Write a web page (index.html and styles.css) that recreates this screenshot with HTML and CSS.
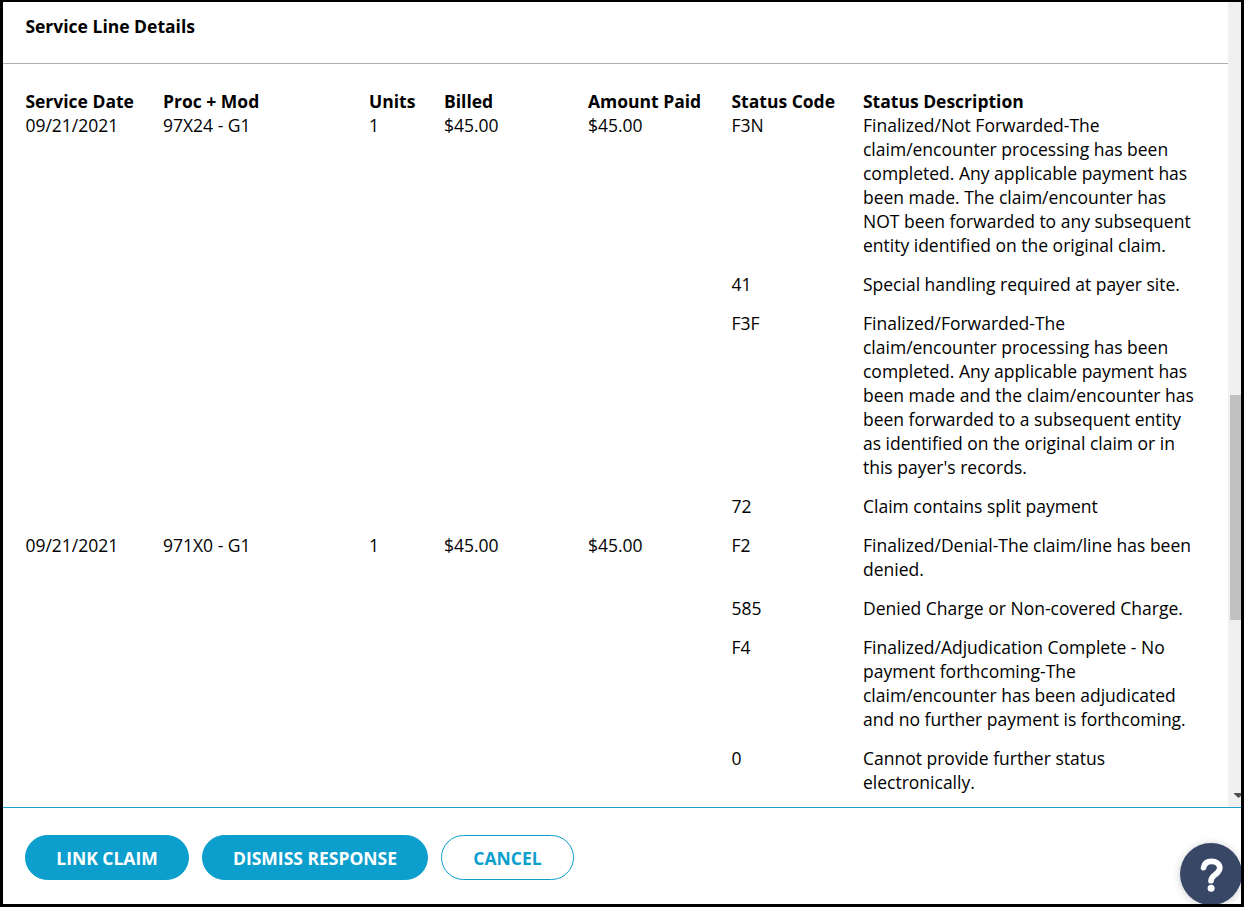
FILE: index.html
```html
<!DOCTYPE html>
<html lang="en">
<head>
<meta charset="utf-8">
<title>Service Line Details</title>
<link rel="stylesheet" href="styles.css">
</head>
<body>
<div class="dialog">
  <div class="body">
    <main class="content">
      <h1 class="title">Service Line Details</h1>
      <section class="lines">
        <div class="row head"><div>Service Date</div><div>Proc + Mod</div><div>Units</div><div>Billed</div><div>Amount Paid</div><div>Status Code</div><div>Status Description</div></div>
        <div class="row">
          <div>09/21/2021</div><div>97X24 - G1</div><div>1</div><div>$45.00</div><div>$45.00</div>
          <div class="statuses">
            <div class="status"><span>F3N</span><p>Finalized/Not Forwarded-The<br>claim/encounter processing has been<br>completed. Any applicable payment has<br>been made. The claim/encounter has<br>NOT been forwarded to any subsequent<br>entity identified on the original claim.</p></div>
            <div class="status"><span>41</span><p>Special handling required at payer site.</p></div>
            <div class="status"><span>F3F</span><p>Finalized/Forwarded-The<br>claim/encounter processing has been<br>completed. Any applicable payment has<br>been made and the claim/encounter has<br>been forwarded to a subsequent entity<br>as identified on the original claim or in<br>this payer's records.</p></div>
            <div class="status"><span>72</span><p>Claim contains split payment</p></div>
          </div>
        </div>
        <div class="row">
          <div>09/21/2021</div><div>971X0 - G1</div><div>1</div><div>$45.00</div><div>$45.00</div>
          <div class="statuses">
            <div class="status"><span>F2</span><p>Finalized/Denial-The claim/line has been<br>denied.</p></div>
            <div class="status"><span>585</span><p>Denied Charge or Non-covered Charge.</p></div>
            <div class="status"><span>F4</span><p>Finalized/Adjudication Complete - No<br>payment forthcoming-The<br>claim/encounter has been adjudicated<br>and no further payment is forthcoming.</p></div>
            <div class="status"><span>0</span><p>Cannot provide further status<br>electronically.</p></div>
          </div>
        </div>
      </section>
    </main>
    <div class="scrollbar"><div class="thumb"></div><svg class="arrow" width="9" height="5" viewBox="0 0 9 5"><path d="M0 0h9v.8L4.500 5 0 .8z" fill="#505050"/></svg></div>
  </div>
  <footer class="actions">
    <button class="btn link">LINK CLAIM</button>
    <button class="btn dismiss">DISMISS RESPONSE</button>
    <button class="btn cancel">CANCEL</button>
  </footer>
  <button class="help" aria-label="Help"><svg width="62" height="62" viewBox="0 0 62 62"><path d="M23.600 24.600C24.200 20.700 27 18.400 31.500 18.400c4.900 0 8.300 2.600 8.300 6.700 0 6.300-8.700 6.500-8.800 12.600" fill="none" stroke="#fff" stroke-width="5.700" stroke-linecap="round"/><circle cx="31.100" cy="45.300" r="3.500" fill="#fff"/></svg></button>
</div>
</body>
</html>
```
FILE: styles.css
```css
* { box-sizing: border-box; }
body { margin: 0; font: 17.5px/24px "Open Sans", sans-serif; color: #000; background: #fff; }
.dialog { position: relative; width: 1244px; height: 907px; border: 2px solid #000; border-left-width: 3px; border-right-width: 3px; border-bottom-width: 3px; overflow: hidden; display: flex; flex-direction: column; }
.body { display: flex; height: 806px; border-bottom: 1px solid #1ba1cb; }
.content { width: 1225px; flex: none; }
.title { margin: 0; height: 62px; padding: 12px 22px 0 22.4px; border-bottom: 1px solid #b0b0b0; font-size: 17.5px; line-height: 24px; font-weight: 700; }
.lines { padding: 25px 22px 0 22.4px; }
.row { display: grid; grid-template-columns: 137.6px 206px 75px 144px 143.5px 131.5px 345px; font-weight: 400; }
.head { font-weight: 700; }
.statuses { grid-column: 6 / 8; }
.status { display: grid; grid-template-columns: 131.5px 345px; margin-bottom: 15px; }
.status p { margin: 0; white-space: nowrap; }
.scrollbar { flex: 1; background: #f0f0f0; overflow: hidden; }
.thumb { width: 11px; height: 225px; margin: 393px 0 0 2px; background: #c1c1c1; }
.arrow { display: block; margin: 173px 0 0 6px; }
.actions { display: flex; gap: 13px; padding: 27px 22px 0; }
.btn { height: 45px; padding: 1px 0 0; border: 1px solid #0c9fce; border-radius: 23px; background: #0c9fce; color: #fff; font: 700 17.5px/24px "Open Sans", sans-serif; white-space: nowrap; }
.link { width: 164px; }
.dismiss { width: 226px; }
.cancel { width: 133px; background: #fff; color: #0c9fce; }
.help { position: absolute; left: 1177px; top: 841px; width: 62px; height: 62px; padding: 0; border: 0; border-radius: 50%; background: #384766; box-shadow: 0 1px 8px rgba(0, 0, 0, .2); }
.help svg { display: block; }
```
